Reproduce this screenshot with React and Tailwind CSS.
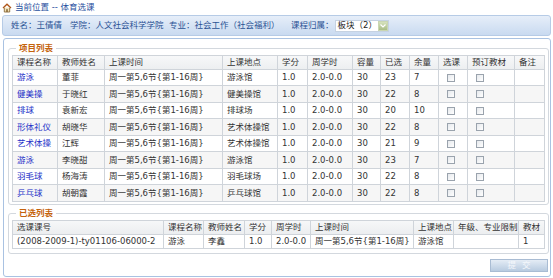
import React from "react";

const rows = [
  ["游泳", "董菲", "游泳馆", "23", "7"],
  ["健美操", "于晓红", "健美操馆", "22", "8"],
  ["排球", "袁新宏", "排球场", "20", "10"],
  ["形体礼仪", "胡晓华", "艺术体操馆", "22", "8"],
  ["艺术体操", "江辉", "艺术体操馆", "21", "9"],
  ["游泳", "李晓甜", "游泳馆", "23", "7"],
  ["羽毛球", "杨海涛", "羽毛球场", "22", "8"],
  ["乒乓球", "胡朝霞", "乒乓球馆", "22", "8"],
];

function Box() {
  return (
    <span className="inline-block w-[8px] h-[8px] border border-[#9aa3ad] bg-gradient-to-br from-[#e6e9ed] to-[#ffffff] align-middle ml-[4px]"></span>
  );
}

function House() {
  return (
    <svg width="10" height="10" viewBox="0 0 10 10">
      <path d="M1 5 L5 1.2 L9 5" fill="none" stroke="#b0561a" strokeWidth="1.3" />
      <path d="M2.3 4.6 V9 H7.7 V4.6" fill="#f3e3b8" stroke="#8a6a3a" strokeWidth="0.9" />
      <rect x="4.2" y="6.2" width="1.6" height="2.8" fill="#8a6a3a" />
    </svg>
  );
}

const td = "border border-[#cfd4da] px-[4px] py-0 text-left font-normal whitespace-nowrap";

export default function App() {
  return (
    <div className="w-[553px] h-[278px] bg-white font-['DejaVu_Sans','Noto_Sans_CJK_SC',sans-serif] text-[8.5px] text-[#333] overflow-hidden">
      <div className="h-[15px] flex items-center pl-[2px] gap-[3px] text-[#1f4f9e]">
        <House />
        <span>当前位置 -- 体育选课</span>
      </div>
      <div className="mx-[2px] w-[549px] h-[21px] rounded-[3px] border border-[#b6cbe6] bg-gradient-to-b from-[#e6eef9] to-[#c9daf0] flex items-center text-[#2a5294]">
        <span className="ml-[8px] w-[59px]">姓名：王倩倩</span>
        <span className="w-[99px]">学院：人文社会科学学院</span>
        <span className="w-[122px]">专业：社会工作（社会福利）</span>
        <span className="ml-[0px]">课程归属：</span>
        <div className="ml-[1px] w-[54px] h-[12px] bg-white border border-[#c5d2e2] flex items-center justify-between pl-[2px] text-[#222]">
          <span>板块（2）</span>
          <span className="w-[10px] h-[10px] mr-[0px] bg-gradient-to-b from-[#d6e2bd] to-[#a9bd86] border border-[#c9d6b2] flex items-center justify-center">
            <svg width="6" height="4" viewBox="0 0 6 4"><path d="M0.5 0.5 L3 3 L5.5 0.5" fill="none" stroke="#fff" strokeWidth="1.2" /></svg>
          </span>
        </div>
      </div>
      <div className="mt-[2px] ml-[3px] w-[548px] h-[239px] border border-[#a9c2e2] rounded-[3px] bg-white pt-[4px] pl-[4px] pr-[3px] flex flex-col">
        <fieldset className="border border-[#d3d8de] rounded-[3px] px-[3px] pb-[2px] w-[538px]">
          <legend className="ml-[4px] px-[3px] font-bold text-[#c4620c] leading-[11px]">项目列表</legend>
          <table className="table-fixed border-collapse w-[532px] mt-[1px]">
            <colgroup>
              <col className="w-[45px]" />
              <col className="w-[47px]" />
              <col className="w-[118px]" />
              <col className="w-[55px]" />
              <col className="w-[30px]" />
              <col className="w-[45px]" />
              <col className="w-[28px]" />
              <col className="w-[29px]" />
              <col className="w-[29px]" />
              <col className="w-[29px]" />
              <col className="w-[47px]" />
              <col className="w-[30px]" />
            </colgroup>
            <thead>
              <tr className="h-[13px] bg-gradient-to-b from-[#f7f8f9] to-[#eceef0]">
                {["课程名称", "教师姓名", "上课时间", "上课地点", "学分", "周学时", "容量", "已选", "余量", "选课", "预订教材", "备注"].map((h) => (
                  <th key={h} className={td}>{h}</th>
                ))}
              </tr>
            </thead>
            <tbody>
              {rows.map((r, i) => (
                <tr key={i} className={"h-[16.5px] " + (i % 2 === 1 ? "bg-[#f6f6f6]" : "bg-white")}>
                  <td className={td + " text-[#2430c8]"}>{r[0]}</td>
                  <td className={td}>{r[1]}</td>
                  <td className={td}>周一第5,6节{"{"}第1-16周{"}"}</td>
                  <td className={td}>{r[2]}</td>
                  <td className={td}>1.0</td>
                  <td className={td}>2.0-0.0</td>
                  <td className={td}>30</td>
                  <td className={td}>{r[3]}</td>
                  <td className={td}>{r[4]}</td>
                  <td className={td}><Box /></td>
                  <td className={td}><Box /></td>
                  <td className={td}></td>
                </tr>
              ))}
            </tbody>
          </table>
        </fieldset>
        <fieldset className="mt-[3px] border border-[#d3d8de] rounded-[3px] px-[3px] pb-[4px] w-[538px]">
          <legend className="ml-[4px] px-[3px] font-bold text-[#c4620c] leading-[11px]">已选列表</legend>
          <table className="table-fixed border-collapse w-[532px] mt-[1px]">
            <colgroup>
              <col className="w-[151px]" />
              <col className="w-[40px]" />
              <col className="w-[41px]" />
              <col className="w-[27px]" />
              <col className="w-[39px]" />
              <col className="w-[103px]" />
              <col className="w-[40px]" />
              <col className="w-[65px]" />
              <col className="w-[26px]" />
            </colgroup>
            <thead>
              <tr className="h-[13px] bg-gradient-to-b from-[#f7f8f9] to-[#eceef0]">
                {["选课课号", "课程名称", "教师姓名", "学分", "周学时", "上课时间", "上课地点", "年级、专业限制", "教材"].map((h) => (
                  <th key={h} className={td}>{h}</th>
                ))}
              </tr>
            </thead>
            <tbody>
              <tr className="h-[14px]">
                <td className={td}>(2008-2009-1)-ty01106-06000-2</td>
                <td className={td}>游泳</td>
                <td className={td}>李鑫</td>
                <td className={td}>1.0</td>
                <td className={td}>2.0-0.0</td>
                <td className={td}>周一第5,6节{"{"}第1-16周{"}"}</td>
                <td className={td}>游泳馆</td>
                <td className={td}></td>
                <td className={td}>1</td>
              </tr>
            </tbody>
          </table>
        </fieldset>
        <div className="mt-auto mb-[4px] flex justify-end">
          <button className="w-[58px] h-[13px] mr-[-1px] border border-[#a9bcd3] bg-gradient-to-b from-[#e4ecf5] to-[#b8cbe0] text-[#f4f7fb] text-[8.5px] leading-[11px] tracking-[6px] pl-[6px]">提交</button>
        </div>
      </div>
    </div>
  );
}
